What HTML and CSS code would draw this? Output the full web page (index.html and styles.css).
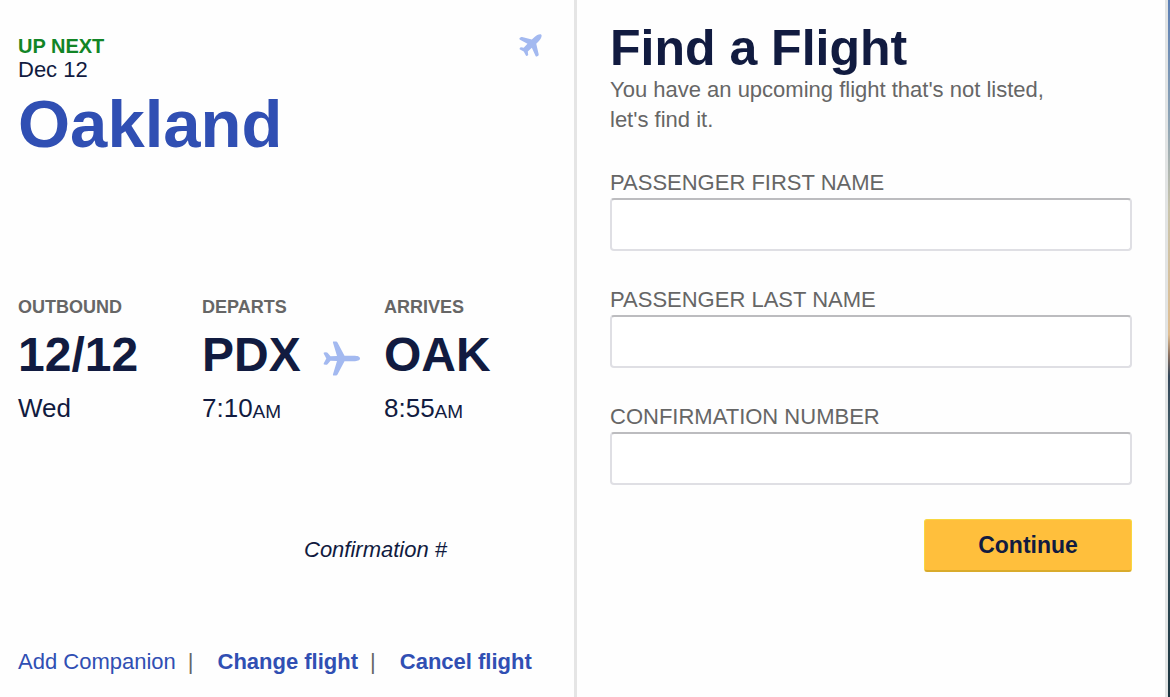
FILE: index.html
```html
<!DOCTYPE html>
<html lang="en">
<head>
    <meta charset="UTF-8">
    <meta name="viewport" content="width=device-width, initial-scale=1.0">
    <title>My Flights</title>
    <link rel="stylesheet" href="styles.css">
</head>
<body>

    <div class="page">
        <!-- Upcoming trip -->
        <section class="trip">
            <div class="trip-header">
                <div>
                    <p class="status">UP NEXT</p>
                    <p class="date">Dec 12</p>
                    <h1 class="city">Oakland</h1>
                </div>
                <svg class="trip-icon" viewBox="0 0 68 68" aria-hidden="true">
                    <path d="M66 2C61 -1 52 4 46 9L38 16L9 9Q6 8 4 10L2 12Q0 15 3 17L25 29L14 41L6 39Q4 39 3 41L2 43Q1 45 3 46L14 52L20 63Q21 66 24 65L26 63Q28 62 27 60L26 52L38 41L49 65Q51 68 54 66L57 64Q59 62 58 59L51 29L59 21C64 15 69 7 66 2Z"/>
                </svg>
            </div>

            <div class="legs">
                <div class="leg">
                    <h2>OUTBOUND</h2>
                    <p class="code">12/12</p>
                    <p class="time">Wed</p>
                </div>
                <div class="leg">
                    <h2>DEPARTS</h2>
                    <p class="code">PDX
                        <svg class="plane" viewBox="0 0 37 35" aria-hidden="true">
                            <path d="M37 17.500C37 15.500 34 14.800 31 14.800L21.500 14.800L14.500 1.500Q14 .500 13 .500L10.500 .500Q9.500 .500 10 1.800L14 15L7.500 15.300L4.500 11.800Q4 11.300 3 11.300L1 11.500Q.400 11.700 .800 12.700L3.300 17.500L.800 22.300Q.400 23.300 1 23.500L3 23.700Q4 23.700 4.500 23.200L7.500 19.700L14 20L10 33.200Q9.500 34.500 10.500 34.500L13 34.500Q14 34.500 14.500 33.500L21.500 20.200L31 20.200C34 20.200 37 19.500 37 17.500Z"/>
                        </svg>
                    </p>
                    <p class="time">7:10<span class="ampm">AM</span></p>
                </div>
                <div class="leg">
                    <h2>ARRIVES</h2>
                    <p class="code">OAK</p>
                    <p class="time">8:55<span class="ampm">AM</span></p>
                </div>
            </div>

            <p class="confirmation">Confirmation #</p>

            <nav class="actions">
                <a href="#">Add Companion</a>
                <span class="separator">|</span>
                <a href="#" class="strong">Change flight</a>
                <span class="separator">|</span>
                <a href="#" class="strong">Cancel flight</a>
            </nav>
        </section>

        <!-- Flight lookup -->
        <section class="finder">
            <h1>Find a Flight</h1>
            <p class="intro">You have an upcoming flight that's not listed, let's find it.</p>

            <form class="finder-form">
                <div class="field">
                    <label for="firstName">PASSENGER FIRST NAME</label>
                    <input type="text" id="firstName" name="firstName">
                </div>
                <div class="field">
                    <label for="lastName">PASSENGER LAST NAME</label>
                    <input type="text" id="lastName" name="lastName">
                </div>
                <div class="field">
                    <label for="confirmationNumber">CONFIRMATION NUMBER</label>
                    <input type="text" id="confirmationNumber" name="confirmationNumber">
                </div>
                <button type="submit">Continue</button>
            </form>
        </section>

        <!-- Edge of the background photo -->
        <div class="backdrop"></div>
    </div>

</body>
</html>
```
FILE: styles.css
```css
* {
    box-sizing: border-box;
}

body {
    margin: 0;
    font-family: "Liberation Sans", Arial, sans-serif;
    font-size: 22px;
    line-height: 24px;
    color: #111b40;
    background-color: #fefefe;
}

h1, h2, p {
    margin: 0;
}

.page {
    display: grid;
    grid-template-columns: 577fr 591fr 2px;
    min-height: 100vh;
}

.trip {
    padding: 34px 32px 20px 18px;
    border-right: 3px solid #e5e5e5;
}

.trip-header {
    display: flex;
    justify-content: space-between;
    align-items: flex-start;
}

.status {
    font-size: 20px;
    font-weight: bold;
    color: #128526;
}

.city {
    font-size: 67px;
    line-height: 84px;
    color: #304fb3;
}

.trip-icon, .plane {
    fill: #a3b9f0;
}

.trip-icon {
    width: 23px;
    height: 23px;
}

.legs {
    display: grid;
    grid-template-columns: 184px 182px auto;
    margin-top: 129px;
}

.leg h2 {
    font-size: 18px;
    line-height: 24px;
    color: #666;
}

.code {
    display: flex;
    align-items: center;
    font-size: 48px;
    font-weight: bold;
    line-height: 72px;
}

.plane {
    width: 37px;
    height: 35px;
    margin: 6px 0 0 22px;
}

.time {
    font-size: 26px;
    line-height: 34px;
}

.ampm {
    font-size: 19px;
    line-height: 24px;
    vertical-align: -1px;
}

.confirmation {
    margin: 113px 0 88px 286px;
    font-style: italic;
}

.actions {
    display: flex;
    white-space: nowrap;
}

.actions a {
    color: #304fb3;
    text-decoration: none;
}

.actions a:hover {
    text-decoration: underline;
}

.actions .strong {
    font-weight: bold;
}

.separator {
    margin: 0 24px 0 12px;
    color: #666;
}

.finder {
    padding: 21px 33px 20px;
    border-right: 3px solid #e2e4e4;
}

.finder h1 {
    font-size: 50px;
    line-height: 54px;
}

.intro {
    max-width: 460px;
    margin-bottom: 33px;
    line-height: 30px;
    color: #666;
}

.finder-form {
    display: flex;
    flex-direction: column;
    gap: 34px;
}

.field label {
    display: block;
    line-height: 30px;
    color: #666;
}

.field input {
    display: block;
    width: 100%;
    height: 53px;
    padding: 0 12px;
    font: inherit;
    color: #111b40;
    background-color: #fff;
    border: 2px solid #dfdfe4;
    border-top-color: #bcbcbf;
    border-radius: 4px;
}

button {
    align-self: flex-end;
    width: 208px;
    height: 53px;
    font-family: inherit;
    font-size: 23px;
    font-weight: bold;
    color: #111b40;
    background-color: #ffbf3c;
    border: 1px solid #f8d740;
    border-bottom: 2px solid #d9ab2c;
    border-radius: 3px;
    cursor: pointer;
}

.backdrop {
    background: linear-gradient(#5b7fb5 0%, #8fa5b5 18%, #c9c4ab 30%, #e0bd91 48%, #8a6f60 51%, #33475a 54%, #47636b 65%, #2f4c58 80%, #1c3540 100%);
}
```
